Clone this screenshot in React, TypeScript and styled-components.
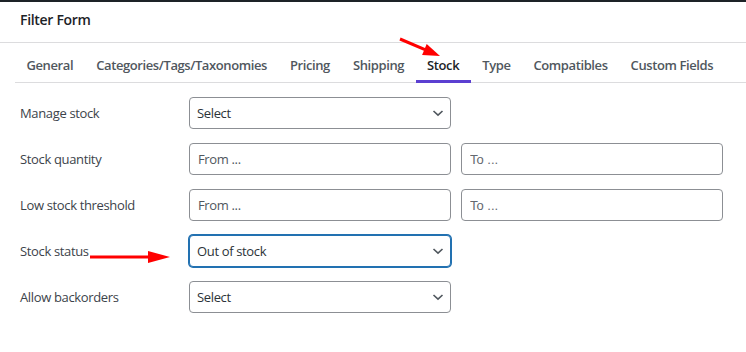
import React from "react";
import styled, { createGlobalStyle } from "styled-components";

const GlobalStyle = createGlobalStyle`
  html, body {
    margin: 0;
    padding: 0;
    background: #fff;
  }
  body {
    font-family: "Open Sans", "Noto Sans", sans-serif;
    color: #3c434a;
  }
`;

const Panel = styled.div`
  position: relative;
  width: 746px;
  height: 352px;
  box-sizing: border-box;
  border-top: 2px solid #1d2327;
  background: #fff;
  overflow: hidden;
`;

const Header = styled.h2`
  margin: 0;
  padding: 0 20px;
  height: 40px;
  line-height: 35px;
  font-size: 14px;
  font-weight: 600;
  letter-spacing: -0.3px;
  color: #1d2327;
  border-bottom: 1px solid #dcdcde;
`;

const TabBar = styled.nav`
  display: flex;
  margin-left: 15px;
  border-bottom: 1px solid #dcdcde;
`;

const Tab = styled.a<{ $active?: boolean }>`
  padding: 8px 11.5px 0;
  line-height: 29px;
  margin-bottom: -1px;
  font-size: 13px;
  font-weight: 600;
  letter-spacing: -0.4px;
  white-space: nowrap;
  text-decoration: none;
  color: ${(p) => (p.$active ? "#1d2327" : "#50575e")};
  border-bottom: 3px solid ${(p) => (p.$active ? "#5b3fd1" : "transparent")};
`;

const Form = styled.div`
  display: grid;
  grid-template-columns: 159px 262px 262px;
  column-gap: 10px;
  row-gap: 14px;
  padding: 14px 20px;
  align-items: center;
`;

const Label = styled.label`
  font-size: 13px;
  letter-spacing: -0.35px;
  color: #3c434a;
  grid-column: 1;
`;

const Field = styled.input<{ $alt?: boolean }>`
  box-sizing: border-box;
  height: 32px;
  width: 100%;
  padding: 0 8px;
  border: 1px solid #8c8f94;
  border-radius: 4px;
  font-family: ${(p) =>
    p.$alt ? '"Liberation Sans", Arial, sans-serif' : '"Open Sans", sans-serif'};
  font-size: 13px;
  letter-spacing: ${(p) => (p.$alt ? "0" : "-0.35px")};
  color: #2c3338;
  outline: none;
  &::placeholder {
    color: ${(p) => (p.$alt ? "#646970" : "#50575e")};
  }
`;

const SelectWrap = styled.div`
  position: relative;
  height: 32px;
`;

const Select = styled.select<{ $focus?: boolean }>`
  appearance: none;
  box-sizing: border-box;
  width: 100%;
  height: 32px;
  padding: 0 24px 0 7px;
  border: 1px solid ${(p) => (p.$focus ? "#2271b1" : "#8c8f94")};
  box-shadow: ${(p) => (p.$focus ? "0 0 0 1px #2271b1" : "none")};
  border-radius: 4px;
  background: #fff;
  font-family: "Open Sans", sans-serif;
  font-size: 13px;
  letter-spacing: -0.35px;
  color: #2c3338;
  outline: none;
`;

const Chevron = styled.svg`
  position: absolute;
  right: 7px;
  top: 11px;
  pointer-events: none;
`;

const Annotation = styled.svg`
  position: absolute;
  left: 0;
  top: -2px;
  pointer-events: none;
`;

const tabs = [
  "General",
  "Categories/Tags/Taxonomies",
  "Pricing",
  "Shipping",
  "Stock",
  "Type",
  "Compatibles",
  "Custom Fields",
];

const Dropdown: React.FC<{ value: string; focus?: boolean }> = ({ value, focus }) => (
  <SelectWrap>
    <Select $focus={focus} defaultValue={value}>
      <option>{value}</option>
    </Select>
    <Chevron width="12" height="10" viewBox="0 0 12 10">
      <path d="M1.5 3 L6 7.2 L10.5 3" fill="none" stroke="#50575e" strokeWidth="1.6" />
    </Chevron>
  </SelectWrap>
);

const App: React.FC = () => {
  return (
    <>
      <GlobalStyle />
      <Panel>
        <Header>Filter Form</Header>
        <TabBar>
          {tabs.map((t) => (
            <Tab key={t} $active={t === "Stock"}>
              {t}
            </Tab>
          ))}
        </TabBar>
        <Form>
          <Label>Manage stock</Label>
          <Dropdown value="Select" />
          <span />

          <Label>Stock quantity</Label>
          <Field placeholder="From ..." />
          <Field $alt placeholder="To ..." />

          <Label>Low stock threshold</Label>
          <Field placeholder="From ..." />
          <Field $alt placeholder="To ..." />

          <Label>Stock status</Label>
          <Dropdown value="Out of stock" focus />
          <span />

          <Label>Allow backorders</Label>
          <Dropdown value="Select" />
          <span />
        </Form>
        <Annotation width="746" height="352" viewBox="0 0 746 352">
          <line x1="400" y1="39" x2="425" y2="49.6" stroke="#f00" strokeWidth="3" />
          <polygon points="440,56 422.1,54.9 426.7,43.9" fill="#f00" />
          <line x1="90" y1="257" x2="150" y2="257" stroke="#f00" strokeWidth="3" />
          <polygon points="170,257 148,251 148,263" fill="#f00" />
        </Annotation>
      </Panel>
    </>
  );
};

export default App;
